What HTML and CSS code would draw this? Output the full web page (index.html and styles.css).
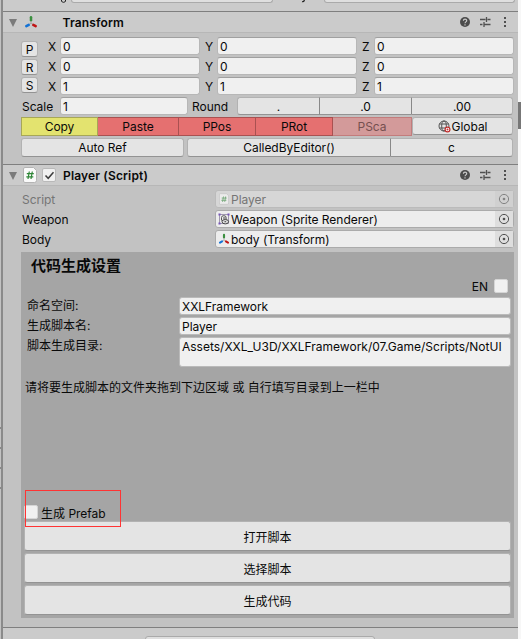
FILE: index.html
```html
<!DOCTYPE html>
<html lang="zh-CN">
<head>
<meta charset="utf-8">
<title>Inspector</title>
<link rel="stylesheet" href="styles.css">
</head>
<body>
<svg class="defs" width="0" height="0">
  <symbol id="axis" viewBox="0 0 14 14">
    <g fill="none" stroke-width="2.5" stroke-linecap="round">
      <path d="M7 2.200v3" stroke="#3b8f3f"/>
      <path d="M4.800 9.800 2.300 11.200" stroke="#1272d6"/>
      <path d="M9.200 9.800 11.700 11.200" stroke="#c01414"/>
    </g>
    <path d="M7 6v2.300L5.400 9.200M7 8.300l1.600.9" fill="none" stroke="#999" stroke-width=".7"/>
  </symbol>
  <symbol id="help" viewBox="0 0 12 12">
    <circle cx="6" cy="6" r="5" fill="#4c4c4c"/>
    <path d="M4.400 4.800c0-2.200 3.300-2.100 3.300-.2C7.700 5.900 6 5.900 6 7.300M6 8.200v1.200" fill="none" stroke="#cbcbcb" stroke-width="1.200"/>
  </symbol>
  <symbol id="sliders" viewBox="0 0 12 12">
    <path d="M1 3.500h5.500M8.500 3.500h3M7.500 1v5M1 8.500h2.500M5.500 8.500h6M5 6v5" fill="none" stroke="#505050" stroke-width="1.300"/>
  </symbol>
  <symbol id="dots" viewBox="0 0 4 12">
    <path d="M1 1h2v2H1zM1 5h2v2H1zM1 9h2v2H1z" fill="#505050"/>
  </symbol>
  <symbol id="target" viewBox="0 0 12 12">
    <circle cx="6" cy="6" r="4.600" fill="none" stroke="#505050"/>
    <circle cx="6" cy="6" r="1.300" fill="#505050"/>
  </symbol>
  <symbol id="script" viewBox="0 0 14 16">
    <path d="M2 .5h8.500l3 3v10a2 2 0 0 1-2 2H2A1.500 1.500 0 0 1 .5 14V2A1.500 1.500 0 0 1 2 .5z" fill="#fafafa" stroke="#b4b4b4"/>
    <path d="M6.300 4.500 5 12M9.300 4.500 8 12M3.800 6.700h7M3.300 9.800h7" fill="none" stroke="#2f8637" stroke-width="1.200"/>
  </symbol>
</svg>
<div class="window">
  <div class="edge"><i></i><i></i><i></i><i></i></div>
  <main class="inspector">
    <div class="previous">
      <svg class="tag" width="7" height="4" viewBox="0 0 7 4"><path d="M1.500 0v1c.3 1.800 3.800 1.800 4 0V0" fill="none" stroke="#222"/></svg><span class="clip-field tag-field"></span>
      <svg class="layer" width="6" height="4" viewBox="0 0 6 4"><path d="M3.500 0C3 1.500 2.500 2 1 1.700" fill="none" stroke="#222" stroke-width="1.200"/></svg><span class="clip-field layer-field"></span>
    </div>

    <section>
      <header class="head">
        <i class="fold"></i>
        <svg class="head-axis"><use href="#axis"/></svg>
        <h2 class="transform-title">Transform</h2>
        <svg class="help"><use href="#help"/></svg>
        <svg class="sliders"><use href="#sliders"/></svg>
        <svg class="dots"><use href="#dots"/></svg>
      </header>
      <div class="transform">
        <div class="vectors">
          <div class="resets"><button>P</button><button>R</button><button>S</button></div>
          <div class="grid">
            <label>X</label><span class="field">0</span><label>Y</label><span class="field">0</span><label>Z</label><span class="field">0</span>
            <label>X</label><span class="field">0</span><label>Y</label><span class="field">0</span><label>Z</label><span class="field">0</span>
            <label>X</label><span class="field">1</span><label>Y</label><span class="field">1</span><label>Z</label><span class="field">1</span>
          </div>
        </div>
        <div class="scale">
          <label class="scale-label">Scale</label><span class="field">1</span><label class="round-label">Round</label>
          <div class="joined rounding"><button>.</button><button>.0</button><button>.00</button></div>
        </div>
        <div class="clipboard">
          <button class="copy">Copy</button><button class="red">Paste</button><button class="red">PPos</button><button class="red">PRot</button><button class="red off">PSca</button>
          <button class="global"><svg width="13" height="13" viewBox="0 0 13 13"><g fill="none" stroke="#555"><circle cx="6" cy="6" r="5"/><ellipse cx="6" cy="6" rx="2.300" ry="5"/><path d="M1.500 4h9M1.500 8h9"/></g><circle cx="9.500" cy="9.500" r="2.400" fill="#fff" stroke="#c22f2f" stroke-width="1.200"/><path d="M8.500 9.500h2M9.500 8.500v2" stroke="#c22f2f" stroke-width=".8"/></svg>Global</button>
        </div>
        <div class="methods">
          <button class="auto">Auto Ref</button>
          <div class="joined calls"><button>CalledByEditor()</button><button>c</button></div>
        </div>
      </div>
    </section>

    <section>
      <header class="head player-head">
        <i class="fold"></i>
        <svg class="head-script"><use href="#script"/></svg>
        <span class="check on"><svg width="11" height="11" viewBox="0 0 11 11"><path d="m1.500 5.500 2.700 2.800 5.300-6" fill="none" stroke="#3c3c3c" stroke-width="1.500"/></svg></span>
        <h2>Player (Script)</h2>
        <svg class="help"><use href="#help"/></svg>
        <svg class="sliders"><use href="#sliders"/></svg>
        <svg class="dots"><use href="#dots"/></svg>
      </header>
      <div class="props">
        <div class="prop disabled"><label>Script</label><span class="object"><svg class="small-script" viewBox="0 0 14 16"><use href="#script" width="14" height="16"/></svg><span>Player</span><b><svg><use href="#target"/></svg></b></span></div>
        <div class="prop"><label>Weapon</label><span class="object"><svg class="ref-icon" viewBox="0 0 12 12"><path d="M1.500 1.500h9v9h-9z" fill="none" stroke="#8a80a0" stroke-width=".8"/><path d="M.5.500h2v2h-2zM9.500.500h2v2h-2zM.5 9.500h2v2h-2z" fill="#7654b8"/><path d="M3.500 7.500v-3a2.300 1.800 0 0 1 4.600 0v2" fill="none" stroke="#555"/><ellipse cx="7.300" cy="8.700" rx="3.300" ry="2.200" fill="#ddd" stroke="#444"/><path d="M5 5h2.500M6.500 8.700h1.600" stroke="#444"/></svg><span>Weapon (Sprite Renderer)</span><b><svg><use href="#target"/></svg></b></span></div>
        <div class="prop"><label>Body</label><span class="object"><svg class="ref-icon"><use href="#axis"/></svg><span>body (Transform)</span><b><svg><use href="#target"/></svg></b></span></div>
      </div>
      <div class="generator">
        <h3>代码生成设置</h3>
        <div class="language"><label>EN</label><span class="check"></span></div>
        <div class="setting"><label>命名空间:</label><span class="field">XXLFramework</span></div>
        <div class="setting"><label>生成脚本名:</label><span class="field">Player</span></div>
        <div class="setting tall"><label>脚本生成目录:</label><span class="field path">Assets/XXL_U3D/XXLFramework/07.Game/Scripts/NotUI</span></div>
        <p class="hint">请将要生成脚本的文件夹拖到下边区域 或 自行填写目录到上一栏中</p>
        <div class="prefab"><span class="check"></span><label>生成 Prefab</label><i class="highlight"></i></div>
        <div class="actions"><button>打开脚本</button><button>选择脚本</button><button>生成代码</button></div>
      </div>
    </section>
    <footer><span></span></footer>
  </main>
  <div class="scroll"><i></i></div>
</div>
</body>
</html>
```

FILE: styles.css
```css
* { box-sizing: border-box; }
body { margin: 0; font: 12px/16px Inter, "Noto Sans CJK SC", sans-serif; letter-spacing: -.03px; color: #090909; }
svg { display: block; flex: none; }
button { font: inherit; letter-spacing: inherit; color: inherit; margin: 0; padding: 1px 0 0; display: flex; align-items: center; justify-content: center; background: #e4e4e4; border: 1px solid #b2b2b2; border-bottom-color: #939393; border-radius: 3px; white-space: nowrap; }
h2, h3, p { margin: 0; }
.defs { position: absolute; }
.window { display: flex; width: 521px; height: 639px; overflow: hidden; background: #c2c2c2; }
.edge { width: 3px; border-right: 2px solid #8a8a8a; padding-top: 427px; }
.edge i { display: block; height: 20px; border-top: 2px solid #8a8a8a; }
.inspector { width: 515px; display: flex; flex-direction: column; }
.inspector > * { flex: none; }
.scroll { width: 3px; background: #f7f7f7; padding-top: 102px; }
.scroll i { display: block; height: 27px; background: #777; }

.previous { height: 11px; background: #cbcbcb; display: flex; align-items: flex-start; overflow: hidden; }
.clip-field { height: 3px; background: #dfdfdf; border: 1px solid #aaa; border-top: 0; border-radius: 0 0 3px 3px; }
.tag { margin: 0 4px 0 57px; }
.tag-field { width: 202px; }
.layer { margin: 0 17px 0 28px; }
.layer-field { width: 191px; }

.head { height: 22px; display: flex; align-items: center; background: #cbcbcb; border-top: 1px solid #7f7f7f; border-bottom: 1px solid #b7b7b7; padding-left: 6px; }
.head h2 { flex: 1; font-size: 12px; font-weight: 600; letter-spacing: .15px; padding-top: 2px; }
.fold { border: 4.500px solid transparent; border-top: 8px solid #7b7b7b; border-bottom: 0; margin-top: 1px; }
.head-axis { width: 14px; height: 14px; margin-left: 7px; }
.head .transform-title { margin-left: 24.500px; }
.head-script { width: 14px; height: 16px; margin-left: 6px; }
.check { display: flex; align-items: center; justify-content: center; width: 14px; height: 14px; background: #f0f0f0; border: 1px solid #b9b9b9; border-radius: 2px; }
.player-head .check { margin: 0 7px 0 5px; }
.help { width: 12px; height: 12px; }
.sliders { width: 12px; height: 12px; margin-left: 8px; }
.dots { width: 4px; height: 12px; margin: 0 11px 0 12px; }

.field { display: block; height: 18px; line-height: 18px; background: #f0f0f0; border: 1px solid #b7b7b7; border-top-color: #a0a0a0; border-radius: 3px; padding-left: 2px; white-space: nowrap; }
.transform { height: 131px; padding: 4px 5px 0 18px; }
.vectors { display: flex; height: 60px; }
.resets { width: 17px; padding-top: 4px; }
.resets button { width: 17px; height: 16px; margin-bottom: 2px; padding-top: 2px; }
.grid { margin-left: 10px; display: grid; grid-template-columns: 12px 140px 17px 140px 17px 140px; grid-auto-rows: 18px; row-gap: 2px; }
.grid label { line-height: 20px; padding-left: 5px; }
.grid label:nth-child(6n+1) { padding-left: 0; }
.scale { display: flex; height: 20px; line-height: 20px; }
.scale .field { width: 128px; }
.scale-label { width: 39px; padding-left: 1px; }
.round-label { width: 49px; padding-left: 4px; }
.joined { display: flex; }
.joined button { border-radius: 0; border-right-width: 0; border-left-color: #888; height: 18px; }
.joined button:first-child { border-radius: 3px 0 0 3px; border-left-color: #b2b2b2; }
.joined button:last-child { border-radius: 0 3px 3px 0; border-right-width: 1px; }
.rounding button:nth-child(1) { width: 82px; }
.rounding button:nth-child(2) { width: 92px; }
.rounding button:nth-child(3) { width: 102px; }
.clipboard { display: flex; height: 21px; }
.clipboard button { width: 77px; height: 19px; border-radius: 0; }
.clipboard .copy { background: #e3e36f; border-color: #a7a757; }
.clipboard .red { background: #e57070; border-color: #a95151; border-left-width: 0; }
.clipboard .red:nth-child(2) { width: 81px; }
.clipboard .off { width: 79px; background: #d39a9a; border-color: #c37c7c; color: #765050; }
.clipboard .global { width: 101px; height: 18px; border-radius: 3px; padding-top: 2px; }
.global svg { margin: -2px 1px 0 0; }
.methods { display: flex; gap: 3px; }
.methods .auto { width: 163px; height: 19px; }
.joined.calls button { width: 203px; height: 19px; }
.joined.calls button:last-child { width: 123px; }

.props { padding: 4px 4px 0 19px; }
.prop { display: flex; height: 18px; margin-bottom: 2px; }
.prop label { width: 193px; line-height: 20px; }
.object { display: flex; width: 299px; height: 18px; background: #ededed; border: 1px solid #ababab; border-radius: 3px; align-items: center; }
.object > span { flex: 1; margin-left: 1px; line-height: 17px; padding-top: 1px; }
.object b { width: 18px; height: 16px; background: #dedede; display: flex; align-items: center; justify-content: center; }
.object b svg { width: 12px; height: 12px; }
.ref-icon { width: 12px; height: 12px; margin-left: 2px; }
.small-script { width: 10px; height: 12px; margin: 0 1px 0 3px; }
.disabled { color: #757575; }
.disabled .object { background: #d6d6d6; border-color: #bbb; }
.disabled svg { opacity: .6; }
.disabled .object b { background: #d0d0d0; }

.generator { margin: 4px 4px 0 18px; height: 366px; background: #a5a5a5; padding: 4px 3px 0; }
.generator h3 { font-size: 15px; line-height: 20px; height: 23px; font-weight: 700; letter-spacing: 0; padding-left: 7px; }
.language { display: flex; justify-content: flex-end; height: 18px; }
.language .check { margin: 0 3px 0 6px; }
.generator .check { border-color: #d5d5d5; }
.setting { display: flex; height: 18px; margin-bottom: 2px; padding-left: 3px; }
.setting label { width: 152px; letter-spacing: 0; line-height: 18px; }
.setting .field { width: 332px; border-color: #bababa; }
.setting.tall, .setting .path { height: 30px; }
.setting .path { letter-spacing: 0; }
.hint { margin-top: 12px; padding-left: 1px; height: 119px; line-height: 18px; letter-spacing: 0; white-space: nowrap; }
.prefab { position: relative; display: flex; height: 23px; padding: 7px 0 0 0; letter-spacing: 0; }
.prefab label { margin-left: 3px; line-height: 17px; }
.highlight { position: absolute; left: 1px; top: -8px; width: 96px; height: 37px; border: 1px solid #f33; z-index: 1; }
.actions { display: flex; flex-direction: column; gap: 2px; letter-spacing: 0; }
.actions button { height: 30px; width: 487px; padding-top: 3px; }
footer { margin-top: 9px; border-top: 1px solid #7f7f7f; background: #cbcbcb; height: 12px; overflow: hidden; padding: 8px 0 0 142px; }
footer span { display: block; width: 230px; height: 12px; background: #dfdfdf; border: 1px solid #aaa; border-radius: 3px; }
```
